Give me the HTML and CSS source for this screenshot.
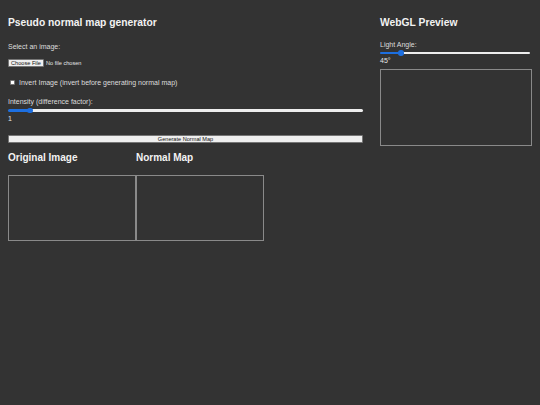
FILE: index.html
```html
<!DOCTYPE html>
<html>
<head>
<meta charset="utf-8">
<title>Pseudo normal map generator</title>
<link rel="stylesheet" href="styles.css">
</head>
<body>
<div class="app">
  <div class="main">
    <h1 class="title">Pseudo normal map generator</h1>
    <div class="field">
      <label class="label">Select an image:</label>
      <div class="file-row">
        <span class="file-btn">Choose File</span>
        <span class="file-name">No file chosen</span>
      </div>
    </div>
    <label class="check-row">
      <span class="checkbox"></span>
      <span>Invert Image (invert before generating normal map)</span>
    </label>
    <div class="field slider-field">
      <label class="label">Intensity (difference factor):</label>
      <input class="slider" type="range" min="0" max="18" value="1" style="--p: 6%">
      <div class="value">1</div>
    </div>
    <button class="generate">Generate Normal Map</button>
    <div class="panels">
      <div class="panel">
        <h2 class="panel-title">Original Image</h2>
        <div class="canvas"></div>
      </div>
      <div class="panel">
        <h2 class="panel-title">Normal Map</h2>
        <div class="canvas"></div>
      </div>
    </div>
  </div>
  <div class="side">
    <h2 class="title">WebGL Preview</h2>
    <div class="field slider-field angle">
      <label class="label">Light Angle:</label>
      <input class="slider" type="range" min="0" max="360" value="45" style="--p: 14%">
      <div class="value">45°</div>
    </div>
    <div class="preview"></div>
  </div>
</div>
</body>
</html>
```

FILE: styles.css
```css
html, body {
  margin: 0;
  padding: 0;
  background: #333333;
}

body {
  padding: 8px;
  width: 540px;
  height: 405px;
  box-sizing: border-box;
  font-family: "Liberation Sans", Arial, sans-serif;
  font-size: 7px;
  line-height: 8px;
  color: #dddddd;
}

.app {
  display: flex;
  gap: 17px;
  align-items: flex-start;
}

.main {
  width: 355px;
  display: flex;
  flex-direction: column;
}

.side {
  width: 152px;
  display: flex;
  flex-direction: column;
}

.title {
  margin: 9px 0 0 0;
  font-size: 10.3px;
  line-height: 12px;
  font-weight: bold;
  color: #f2f2f2;
}

.field {
  display: flex;
  flex-direction: column;
}

.main > .field:first-of-type {
  margin-top: 14px;
}

.label {
  display: block;
}

.file-row {
  display: flex;
  align-items: center;
  gap: 2px;
  margin-top: 7.5px;
  height: 8px;
}

.file-btn {
  box-sizing: border-box;
  width: 36px;
  height: 8px;
  background: #efefef;
  border: 0.5px solid #767676;
  border-radius: 1px;
  color: #111;
  font-size: 5.6px;
  line-height: 7px;
  text-align: center;
}

.file-name {
  font-size: 5.6px;
  color: #e6e6e6;
}

.check-row {
  display: flex;
  align-items: center;
  gap: 4px;
  margin-top: 12px;
  padding-left: 1.5px;
  height: 8px;
}

.checkbox {
  box-sizing: border-box;
  width: 5.5px;
  height: 5.5px;
  background: #ffffff;
  border: 0.5px solid #767676;
  border-radius: 1px;
}

.slider-field {
  margin-top: 11.5px;
}

.slider {
  -webkit-appearance: none;
  appearance: none;
  display: block;
  width: 100%;
  height: 6px;
  margin: 1.5px 0 1px 0;
  padding: 0;
  background: transparent;
}

.slider::-webkit-slider-runnable-track {
  height: 2.5px;
  border-radius: 2px;
  background: linear-gradient(to right, #1d6fe0 var(--p), #eeeeee var(--p));
}

.slider::-webkit-slider-thumb {
  -webkit-appearance: none;
  appearance: none;
  width: 5.5px;
  height: 5.5px;
  margin-top: -1.5px;
  border-radius: 50%;
  background: #1d6fe0;
  border: none;
}

.value {
  color: #e6e6e6;
}

.generate {
  box-sizing: border-box;
  margin: 12px 0 0 0;
  width: 355px;
  height: 8.5px;
  padding: 0;
  background: #efefef;
  border: 0.5px solid #767676;
  border-radius: 1px;
  color: #111;
  font-family: "Liberation Sans", Arial, sans-serif;
  font-size: 5.6px;
  line-height: 7px;
}

.panels {
  display: flex;
  margin-top: 8.5px;
}

.panel {
  width: 128px;
  display: flex;
  flex-direction: column;
}

.panel-title {
  margin: 0;
  font-size: 10px;
  line-height: 12px;
  font-weight: bold;
  color: #f2f2f2;
}

.canvas {
  box-sizing: border-box;
  margin-top: 11.5px;
  width: 128px;
  height: 65.5px;
  border: 1px solid #8a8a8a;
}

.angle {
  margin-top: 11.5px;
}

.angle .slider {
  width: 150px;
}

.preview {
  box-sizing: border-box;
  margin-top: 4px;
  width: 152px;
  height: 77px;
  border: 1px solid #8a8a8a;
}
```
